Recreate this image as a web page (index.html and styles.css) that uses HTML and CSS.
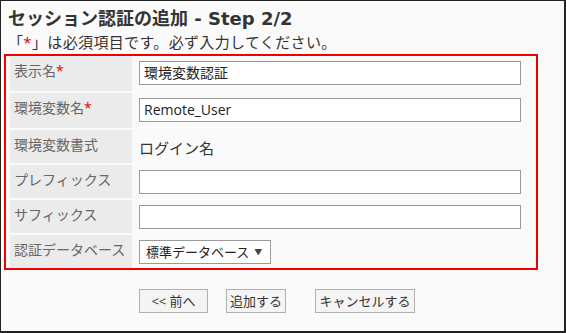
FILE: index.html
```html
<!DOCTYPE html>
<html lang="ja">
<head>
<meta charset="utf-8">
<title>セッション認証の追加</title>
<link rel="stylesheet" href="styles.css">
</head>
<body>
<div class="page">
  <h1 class="title">セッション認証の追加 - Step 2/2</h1>
  <p class="note">「<span class="req">*</span>」は必須項目です。必ず入力してください。</p>
  <div class="form">
    <div class="label">表示名<span class="req">*</span></div>
    <div class="value"><div class="input">環境変数認証</div></div>

    <div class="label">環境変数名<span class="req">*</span></div>
    <div class="value"><div class="input">Remote_User</div></div>

    <div class="label">環境変数書式</div>
    <div class="value text">ログイン名</div>

    <div class="label">プレフィックス</div>
    <div class="value"><div class="input"></div></div>

    <div class="label">サフィックス</div>
    <div class="value"><div class="input"></div></div>

    <div class="label">認証データベース</div>
    <div class="value"><div class="select">標準データベース<span class="arrow">▼</span></div></div>
  </div>
  <div class="buttons">
    <div class="btn btn-prev">&lt;&lt; 前へ</div>
    <div class="btn btn-add">追加する</div>
    <div class="btn btn-cancel">キャンセルする</div>
  </div>
</div>
</body>
</html>
```

FILE: styles.css
```css
html, body {
  margin: 0;
  padding: 0;
}
body {
  font-family: "Open Sans", "Noto Sans CJK JP", sans-serif;
  color: #333;
}
.page {
  box-sizing: border-box;
  width: 566px;
  height: 333px;
  background: #fafafa;
  border-top: 1px solid #222;
  border-left: 1px solid #222;
  border-right: 2px solid #222;
  border-bottom: 2px solid #222;
  overflow: hidden;
}
.title {
  margin: 0;
  padding: 6px 0 0 7px;
  font-family: "DejaVu Sans", "Noto Sans CJK JP", sans-serif;
  font-size: 18px;
  line-height: 24px;
  font-weight: bold;
  color: #333;
}
.note {
  margin: 0 0 0 7px;
  font-size: 15px;
  line-height: 22px;
  letter-spacing: 0.35px;
  color: #333;
}
.req {
  color: #e00000;
}
.form {
  margin: 1px 0 0 3px;
  box-sizing: border-box;
  width: 534px;
  border: 2px solid #f00000;
  padding: 0 0 0 4px;
  display: grid;
  grid-template-columns: 122px 1fr;
  grid-template-rows: 35px 35px 33px 33px 33px 33px;
  row-gap: 2px;
}
.label {
  background: #ebebeb;
  color: #666;
  font-size: 14px;
  line-height: 20px;
  padding: 5px 0 0 4px;
  white-space: nowrap;
}
.value {
  padding-left: 7px;
}
.value.text {
  font-size: 15px;
  line-height: 20px;
  padding-top: 8px;
  color: #333;
}
.input {
  box-sizing: border-box;
  margin-top: 5px;
  width: 382px;
  height: 24px;
  border: 1px solid #9a9a9a;
  background: #fff;
  font-size: 14px;
  line-height: 22px;
  padding-left: 4px;
  color: #222;
}
.select {
  box-sizing: border-box;
  margin-top: 5px;
  width: 132px;
  height: 24px;
  border: 1px solid #9a9a9a;
  background: #fff;
  font-size: 13px;
  line-height: 22px;
  padding-left: 6px;
  color: #222;
  white-space: nowrap;
}
.arrow {
  font-size: 8px;
  margin-left: 5px;
  vertical-align: 2px;
  color: #444;
}
.buttons {
  display: flex;
  margin: 19px 0 0 138px;
}
.btn {
  box-sizing: border-box;
  height: 24px;
  border: 1px solid #b0b0b0;
  background: #f4f4f4;
  font-size: 13px;
  line-height: 22px;
  text-align: center;
  color: #333;
  white-space: nowrap;
}
.btn-prev {
  width: 69px;
}
.btn-add {
  width: 60px;
  margin-left: 18px;
}
.btn-cancel {
  width: 100px;
  margin-left: 29px;
}
```
